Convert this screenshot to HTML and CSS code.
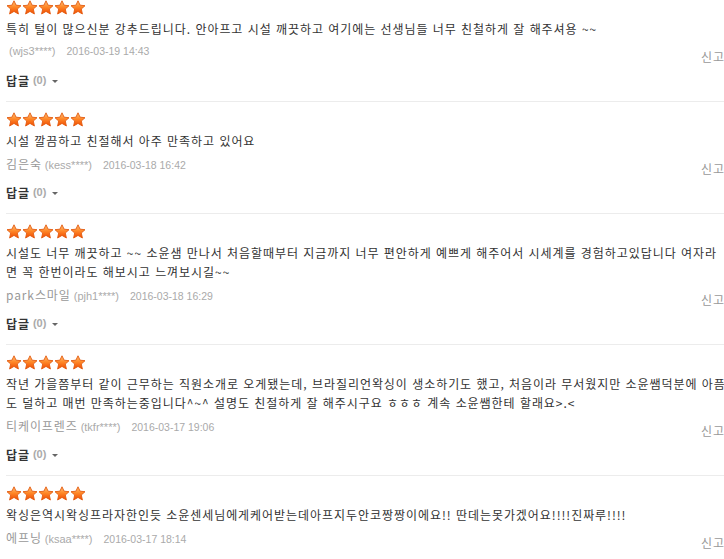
FILE: index.html
```html
<!DOCTYPE html>
<html lang="ko">
<head>
<meta charset="utf-8">
<link rel="stylesheet" href="styles.css">
</head>
<body>
<svg class="defs" width="0" height="0" aria-hidden="true">
  <defs>
    <linearGradient id="sg" x1="0" y1="0" x2="0" y2="1">
      <stop offset="0" stop-color="#ffc27a"/>
      <stop offset="0.45" stop-color="#ff8a2a"/>
      <stop offset="1" stop-color="#f04a00"/>
    </linearGradient>
    <symbol id="star" viewBox="0 0 16 15">
      <path d="M8 0.8 L10.1 5.2 L15 5.7 L11.3 9 L12.4 14 L8 11.4 L3.6 14 L4.7 9 L1 5.7 L5.9 5.2 Z" fill="url(#sg)" stroke="#e25a10" stroke-width="0.9" stroke-linejoin="round"/>
    </symbol>
  </defs>
</svg>
<ul class="reviews">
  <li class="review">
    <div class="stars"><svg><use href="#star"/></svg><svg><use href="#star"/></svg><svg><use href="#star"/></svg><svg><use href="#star"/></svg><svg><use href="#star"/></svg></div>
    <p class="text">특히 털이 많으신분 강추드립니다. 안아프고 시설 깨끗하고 여기에는 선생님들 너무 친철하게 잘 해주셔용 ~~</p>
    <div class="meta">
      <div class="who"><span class="name"></span><span class="uid">(wjs3****)</span><span class="date">2016-03-19 14:43</span></div>
      <a class="report">신고</a>
    </div>
    <div class="reply"><b>답글</b><span class="cnt">(0)</span><span class="caret"></span></div>
  </li>
  <li class="review">
    <div class="stars"><svg><use href="#star"/></svg><svg><use href="#star"/></svg><svg><use href="#star"/></svg><svg><use href="#star"/></svg><svg><use href="#star"/></svg></div>
    <p class="text">시설 깔끔하고 친절해서 아주 만족하고 있어요</p>
    <div class="meta">
      <div class="who"><span class="name">김은숙</span><span class="uid">(kess****)</span><span class="date">2016-03-18 16:42</span></div>
      <a class="report">신고</a>
    </div>
    <div class="reply"><b>답글</b><span class="cnt">(0)</span><span class="caret"></span></div>
  </li>
  <li class="review">
    <div class="stars"><svg><use href="#star"/></svg><svg><use href="#star"/></svg><svg><use href="#star"/></svg><svg><use href="#star"/></svg><svg><use href="#star"/></svg></div>
    <p class="text">시설도 너무 깨끗하고 ~~ 소윤샘 만나서 처음할때부터 지금까지 너무 편안하게 예쁘게 해주어서 시세계를 경험하고있답니다 여자라면 꼭 한번이라도 해보시고 느껴보시길~~</p>
    <div class="meta">
      <div class="who"><span class="name">park스마일</span><span class="uid">(pjh1****)</span><span class="date">2016-03-18 16:29</span></div>
      <a class="report">신고</a>
    </div>
    <div class="reply"><b>답글</b><span class="cnt">(0)</span><span class="caret"></span></div>
  </li>
  <li class="review">
    <div class="stars"><svg><use href="#star"/></svg><svg><use href="#star"/></svg><svg><use href="#star"/></svg><svg><use href="#star"/></svg><svg><use href="#star"/></svg></div>
    <p class="text">작년 가을쯤부터 같이 근무하는 직원소개로 오게됐는데, 브라질리언왁싱이 생소하기도 했고, 처음이라 무서웠지만 소윤쌤덕분에 아픔도 덜하고 매번 만족하는중입니다^~^ 설명도 친절하게 잘 해주시구요 ㅎㅎㅎ 계속 소윤쌤한테 할래요&gt;.&lt;</p>
    <div class="meta">
      <div class="who"><span class="name">티케이프렌즈</span><span class="uid">(tkfr****)</span><span class="date">2016-03-17 19:06</span></div>
      <a class="report">신고</a>
    </div>
    <div class="reply"><b>답글</b><span class="cnt">(0)</span><span class="caret"></span></div>
  </li>
  <li class="review">
    <div class="stars"><svg><use href="#star"/></svg><svg><use href="#star"/></svg><svg><use href="#star"/></svg><svg><use href="#star"/></svg><svg><use href="#star"/></svg></div>
    <p class="text">왁싱은역시왁싱프라자한인듯 소윤센세님에게케어받는데아프지두안코짱짱이에요!! 딴데는못가겠어요!!!!진짜루!!!!</p>
    <div class="meta">
      <div class="who"><span class="name">에프닝</span><span class="uid">(ksaa****)</span><span class="date">2016-03-17 18:14</span></div>
      <a class="report">신고</a>
    </div>
    <div class="reply"><b>답글</b><span class="cnt">(0)</span><span class="caret"></span></div>
  </li>
</ul>
</body>
</html>
```

FILE: styles.css
```css
html, body {
  margin: 0;
  padding: 0;
  background: #fff;
  overflow: hidden;
}
body {
  font-family: "Noto Sans CJK KR", "Liberation Sans", sans-serif;
  font-size: 12px;
  color: #333;
}
.defs {
  position: absolute;
  width: 0;
  height: 0;
}
.reviews {
  list-style: none;
  margin: -10px 0 0 6px;
  padding: 0;
}
.review {
  border-top: 1px solid #ececec;
  padding: 10px 0 11px;
}
.review:first-child {
  border-top: 0;
}
.stars {
  display: flex;
  height: 19px;
}
.stars svg {
  width: 16px;
  height: 15px;
}
.text {
  margin: 0 -5px 0 0;
  line-height: 19px;
  letter-spacing: 0.95px;
  word-break: break-all;
  color: #333;
}
.meta {
  display: flex;
  justify-content: space-between;
  align-items: flex-start;
  margin-top: 4px;
  line-height: 19px;
}
.who {
  display: flex;
  align-items: baseline;
}
.name {
  color: #999;
  letter-spacing: 0.9px;
  margin-right: 3px;
}
.uid {
  font-family: "Liberation Sans", sans-serif;
  font-size: 11px;
  color: #aaa;
  margin-right: 11px;
}
.date {
  font-family: "Liberation Sans", sans-serif;
  font-size: 10.5px;
  color: #aaa;
}
.report {
  color: #999;
  letter-spacing: 0.9px;
  margin-top: 5px;
  margin-right: -1px;
}
.reply {
  display: flex;
  align-items: center;
  margin-top: 5px;
  line-height: 19px;
}
.reply b {
  font-size: 12px;
  font-weight: bold;
  letter-spacing: 0.9px;
  color: #333;
}
.cnt {
  font-family: "Liberation Sans", sans-serif;
  font-size: 11px;
  font-weight: bold;
  color: #aaa;
  margin-left: 3px;
}
.caret {
  width: 0;
  height: 0;
  border-left: 3px solid transparent;
  border-right: 3px solid transparent;
  border-top: 3px solid #666;
  margin-left: 6px;
  margin-top: 2px;
}
```
